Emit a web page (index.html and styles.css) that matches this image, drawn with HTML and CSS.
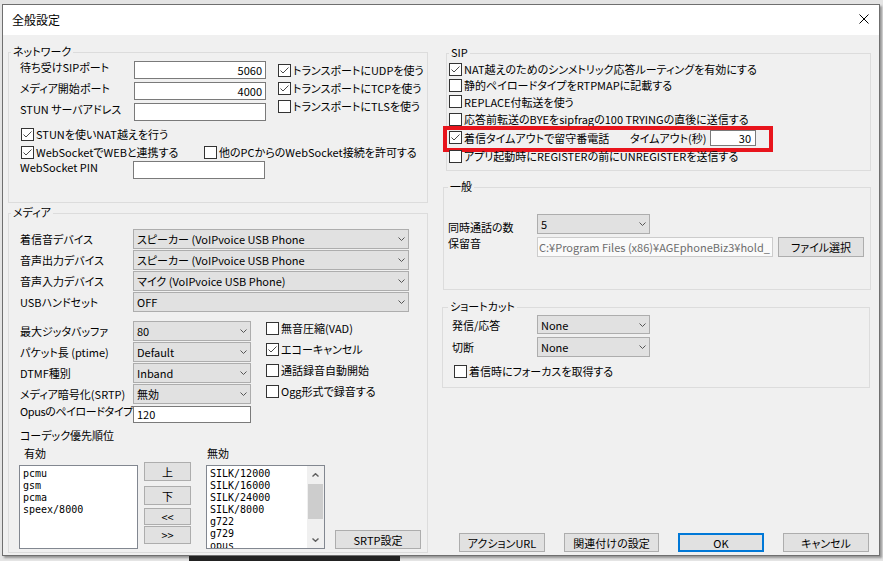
FILE: index.html
```html
<!DOCTYPE html>
<html lang="ja">
<head>
    <meta charset="UTF-8">
    <meta name="viewport" content="width=device-width, initial-scale=1.0">
    <title>全般設定</title>
    <link rel="stylesheet" href="styles.css">
</head>
<body>
<div class="window">
    <div class="titlebar">
        <span class="title">全般設定</span>
        <svg class="close" width="10" height="10" viewBox="0 0 10 10"><path d="M0.5 0.5L9.5 9.5M9.5 0.5L0.5 9.5" stroke="#000" stroke-width="1"/></svg>
    </div>
    <div class="main">
        <div class="col-left">
            <!-- network -->
            <div class="group net">
                <span class="legend">ネットワーク</span>
                <div class="net-top">
                    <div class="fields">
                        <div class="field"><span class="lbl">待ち受けSIPポート</span><span class="edit num">5060</span></div>
                        <div class="field"><span class="lbl">メディア開始ポート</span><span class="edit num">4000</span></div>
                        <div class="field"><span class="lbl">STUN サーバアドレス</span><span class="edit"></span></div>
                    </div>
                    <div class="checks">
                        <div class="check"><span class="cb"><svg width="11" height="11" viewBox="0 0 11 11"><path d="M1.5 5.5L4 8L9.5 2.5" stroke="#4a4a4a" fill="none"/></svg></span>トランスポートにUDPを使う</div>
                        <div class="check"><span class="cb"><svg width="11" height="11" viewBox="0 0 11 11"><path d="M1.5 5.5L4 8L9.5 2.5" stroke="#4a4a4a" fill="none"/></svg></span>トランスポートにTCPを使う</div>
                        <div class="check"><span class="cb"></span>トランスポートにTLSを使う</div>
                    </div>
                </div>
                <div class="check ind stun"><span class="cb"><svg width="11" height="11" viewBox="0 0 11 11"><path d="M1.5 5.5L4 8L9.5 2.5" stroke="#4a4a4a" fill="none"/></svg></span>STUNを使いNAT越えを行う</div>
                <div class="check ind">
                    <span class="ws"><span class="cb"><svg width="11" height="11" viewBox="0 0 11 11"><path d="M1.5 5.5L4 8L9.5 2.5" stroke="#4a4a4a" fill="none"/></svg></span>WebSocketでWEBと連携する</span>
                    <span class="cb"></span>他のPCからのWebSocket接続を許可する
                </div>
                <div class="field pin"><span class="lbl">WebSocket PIN</span><span class="edit"></span></div>
            </div>

            <!-- media -->
            <div class="group media">
                <span class="legend">メディア</span>
                <div class="mrows">
                    <div class="mrow"><span class="lbl">着信音デバイス</span><span class="sel wide">スピーカー (VoIPvoice USB Phone<svg width="7" height="4" viewBox="0 0 7 4"><path d="M0.5 0.5L3.5 3.5L6.5 0.5" stroke="#555" fill="none"/></svg></span></div>
                    <div class="mrow"><span class="lbl">音声出力デバイス</span><span class="sel wide">スピーカー (VoIPvoice USB Phone<svg width="7" height="4" viewBox="0 0 7 4"><path d="M0.5 0.5L3.5 3.5L6.5 0.5" stroke="#555" fill="none"/></svg></span></div>
                    <div class="mrow"><span class="lbl">音声入力デバイス</span><span class="sel wide">マイク (VoIPvoice USB Phone)<svg width="7" height="4" viewBox="0 0 7 4"><path d="M0.5 0.5L3.5 3.5L6.5 0.5" stroke="#555" fill="none"/></svg></span></div>
                    <div class="mrow"><span class="lbl">USBハンドセット</span><span class="sel wide">OFF<svg width="7" height="4" viewBox="0 0 7 4"><path d="M0.5 0.5L3.5 3.5L6.5 0.5" stroke="#555" fill="none"/></svg></span></div>
                </div>
                <div class="mrows second">
                    <div class="mrow"><span class="lbl">最大ジッタバッファ</span><span class="sel mid">80<svg width="7" height="4" viewBox="0 0 7 4"><path d="M0.5 0.5L3.5 3.5L6.5 0.5" stroke="#555" fill="none"/></svg></span><span class="check"><span class="cb"></span>無音圧縮(VAD)</span></div>
                    <div class="mrow"><span class="lbl">パケット長 (ptime)</span><span class="sel mid">Default<svg width="7" height="4" viewBox="0 0 7 4"><path d="M0.5 0.5L3.5 3.5L6.5 0.5" stroke="#555" fill="none"/></svg></span><span class="check"><span class="cb"><svg width="11" height="11" viewBox="0 0 11 11"><path d="M1.5 5.5L4 8L9.5 2.5" stroke="#4a4a4a" fill="none"/></svg></span>エコーキャンセル</span></div>
                    <div class="mrow"><span class="lbl">DTMF種別</span><span class="sel mid">Inband<svg width="7" height="4" viewBox="0 0 7 4"><path d="M0.5 0.5L3.5 3.5L6.5 0.5" stroke="#555" fill="none"/></svg></span><span class="check"><span class="cb"></span>通話録音自動開始</span></div>
                    <div class="mrow"><span class="lbl">メディア暗号化(SRTP)</span><span class="sel mid">無効<svg width="7" height="4" viewBox="0 0 7 4"><path d="M0.5 0.5L3.5 3.5L6.5 0.5" stroke="#555" fill="none"/></svg></span><span class="check"><span class="cb"></span>Ogg形式で録音する</span></div>
                </div>
                <div class="mrow opus"><span class="lbl">Opusのペイロードタイプ</span><span class="edit opus-edit">120</span></div>
                <div class="codec-title">コーデック優先順位</div>
                <div class="codec">
                    <div class="ccol">
                        <div class="clbl">有効</div>
                        <div class="listbox">
                            <div class="items">
                                <div>pcmu</div>
                                <div>gsm</div>
                                <div>pcma</div>
                                <div>speex/8000</div>
                            </div>
                        </div>
                    </div>
                    <div class="cbtns">
                        <span class="btn up">上</span>
                        <span class="btn down">下</span>
                        <span class="btn left">&lt;&lt;</span>
                        <span class="btn right">&gt;&gt;</span>
                    </div>
                    <div class="ccol off">
                        <div class="clbl">無効</div>
                        <div class="listbox">
                            <div class="items">
                                <div>SILK/12000</div>
                                <div>SILK/16000</div>
                                <div>SILK/24000</div>
                                <div>SILK/8000</div>
                                <div>g722</div>
                                <div>g729</div>
                                <div>opus</div>
                            </div>
                            <div class="vscroll">
                                <span class="arrow"><svg width="7" height="4" viewBox="0 0 7 4"><path d="M0.5 3.5L3.5 0.7L6.5 3.5" stroke="#606060" stroke-width="1.4" fill="none"/></svg></span>
                                <span class="thumb"></span>
                                <span class="arrow bottom"><svg width="7" height="4" viewBox="0 0 7 4"><path d="M0.5 0.5L3.5 3.3L6.5 0.5" stroke="#606060" stroke-width="1.4" fill="none"/></svg></span>
                            </div>
                        </div>
                    </div>
                    <span class="btn srtp">SRTP設定</span>
                </div>
            </div>
        </div>

        <div class="col-right">
            <!-- sip -->
            <div class="group sip">
                <span class="legend">SIP</span>
                <div class="srows">
                    <div class="srow h16"><span class="cb"><svg width="11" height="11" viewBox="0 0 11 11"><path d="M1.5 5.5L4 8L9.5 2.5" stroke="#4a4a4a" fill="none"/></svg></span>NAT越えのためのシンメトリック応答ルーティングを有効にする</div>
                    <div class="srow h16"><span class="cb"></span>静的ペイロードタイプをRTPMAPに記載する</div>
                    <div class="srow h17"><span class="cb"></span>REPLACE付転送を使う</div>
                    <div class="srow h18"><span class="cb"></span>応答前転送のBYEをsipfragの100 TRYINGの直後に送信する</div>
                    <div class="srow h19 mark">
                        <span class="cb"><svg width="11" height="11" viewBox="0 0 11 11"><path d="M1.5 5.5L4 8L9.5 2.5" stroke="#4a4a4a" fill="none"/></svg></span>
                        <span class="tcap">着信タイムアウトで留守番電話</span>
                        <span class="tlbl">タイムアウト(秒)</span>
                        <span class="edit num tedit">30</span>
                    </div>
                    <div class="srow h18"><span class="cb"></span>アプリ起動時にREGISTERの前にUNREGISTERを送信する</div>
                </div>
            </div>

            <!-- general -->
            <div class="group gen">
                <span class="legend">一般</span>
                <div class="grow first"><span class="lbl low">同時通話の数</span><span class="sel sm">5<svg width="7" height="4" viewBox="0 0 7 4"><path d="M0.5 0.5L3.5 3.5L6.5 0.5" stroke="#555" fill="none"/></svg></span></div>
                <div class="grow second"><span class="lbl">保留音</span><span class="edit dis">C:¥Program Files (x86)¥AGEphoneBiz3¥hold_</span><span class="btn file">ファイル選択</span></div>
            </div>

            <!-- shortcut -->
            <div class="group cut">
                <span class="legend">ショートカット</span>
                <div class="crow first"><span class="lbl">発信/応答</span><span class="sel sm">None<svg width="7" height="4" viewBox="0 0 7 4"><path d="M0.5 0.5L3.5 3.5L6.5 0.5" stroke="#555" fill="none"/></svg></span></div>
                <div class="crow second"><span class="lbl">切断</span><span class="sel sm">None<svg width="7" height="4" viewBox="0 0 7 4"><path d="M0.5 0.5L3.5 3.5L6.5 0.5" stroke="#555" fill="none"/></svg></span></div>
                <div class="check focus"><span class="cb"></span>着信時にフォーカスを取得する</div>
            </div>

            <div class="btnbar">
                <span class="btn b86">アクションURL</span>
                <span class="btn b95">関連付けの設定</span>
                <span class="btn b86 ok">OK</span>
                <span class="btn b86">キャンセル</span>
            </div>
        </div>
    </div>
</div>
<div class="desk">
    <span class="dark"></span>
</div>
</body>
</html>
```

FILE: styles.css
```css
body {
    margin: 0;
    background: #e4e4e4;
    font-family: "Noto Sans CJK JP", sans-serif;
    font-size: 11px;
    line-height: 14px;
    font-feature-settings: "palt";
    color: #000;
    overflow: hidden;
}

.window {
    box-sizing: border-box;
    width: 878px;
    height: 552px;
    margin: 4px 0 0 2px;
    border: 1px solid #6f6f6f;
    background: #f0f0f0;
    display: flex;
    flex-direction: column;
    box-shadow: 2px 2px 2px rgba(0, 0, 0, 0.35);
}

.titlebar {
    height: 30px;
    flex: none;
    background: #fff;
    display: flex;
    align-items: center;
    justify-content: space-between;
    padding: 0 10px 0 9px;
}
.title {
    font-size: 12px;
}
.close {
    display: block;
    margin-top: -2px;
}

.main {
    flex: 1;
    display: flex;
    min-height: 0;
}
.col-left {
    width: 420px;
    margin-left: 5px;
    display: flex;
    flex-direction: column;
}
.col-right {
    width: 429px;
    margin-left: 14px;
    display: flex;
    flex-direction: column;
}

/* group boxes */
.group {
    box-sizing: border-box;
    border: 1px solid #dcdcdc;
}
.legend {
    display: block;
    width: max-content;
    margin: -9px 0 0 0;
    padding: 0 2px;
    background: #f0f0f0;
}

/* common controls */
.lbl {
    flex: none;
    white-space: nowrap;
    margin-top: -1px;
}
.edit {
    box-sizing: border-box;
    flex: none;
    height: 18px;
    border: 1px solid #7a7a7a;
    background: #fff;
    padding: 0 3px;
    line-height: 16px;
    white-space: nowrap;
    overflow: hidden;
}
.num {
    text-align: right;
}
.sel {
    box-sizing: border-box;
    flex: none;
    height: 20px;
    border: 1px solid #adadad;
    background: #e1e1e1;
    display: flex;
    align-items: center;
    justify-content: space-between;
    padding: 0 3px 0 3px;
    white-space: nowrap;
    overflow: hidden;
}
.sel svg {
    flex: none;
    display: block;
}
.sel.wide { width: 276px; }
.sel.mid { width: 118px; }
.sel.sm { width: 113px; }

.btn {
    box-sizing: border-box;
    flex: none;
    border: 1px solid #adadad;
    background: #e1e1e1;
    display: flex;
    align-items: center;
    justify-content: center;
    white-space: nowrap;
}

.check {
    display: flex;
    align-items: center;
    height: 18px;
    white-space: nowrap;
}
.cb {
    box-sizing: border-box;
    flex: none;
    width: 13px;
    height: 13px;
    border: 1px solid #333;
    background: #fff;
    margin-right: 2px;
    display: flex;
}
.cb svg {
    display: block;
}

/* network */
.net {
    margin-top: 17px;
    height: 151px;
    padding-left: 11px;
}
.net .legend,
.media .legend {
    margin-left: -9px;
}
.net-top {
    display: flex;
    margin-top: 3px;
}
.fields {
    width: 246px;
}
.field {
    display: flex;
    height: 18px;
    margin-bottom: 3px;
}
.fields .field:last-child {
    margin-bottom: 0;
}
.field .lbl {
    width: 114px;
}
.field .edit {
    width: 132px;
}
.checks {
    margin-left: 12px;
}
.net .ind {
    padding-left: 1px;
}
.net .stun {
    margin-top: 4px;
}
.ws {
    display: flex;
    align-items: center;
    width: 183px;
}
.field.pin .lbl {
    width: 113px;
}

/* media */
.media {
    margin-top: 10px;
    height: 340px;
    padding-left: 11px;
}
.mrows {
    margin-top: 10px;
}
.mrows.second {
    margin-top: 9px;
}
.mrow {
    display: flex;
    align-items: center;
    height: 20px;
    margin-bottom: 1px;
}
.mrow .lbl {
    width: 113px;
    margin-top: 0;
}
.mrow .check {
    align-self: flex-start;
    height: 14px;
    margin-left: 15px;
}
.mrow.opus {
    margin-top: 2px;
    height: 17px;
    align-items: flex-start;
    margin-bottom: 0;
}
.mrow.opus .lbl {
    margin-top: -2px;
    letter-spacing: -0.4px;
}
.opus-edit {
    width: 118px;
    height: 17px;
    line-height: 15px;
}
.codec-title {
    margin-top: 5px;
}
.codec {
    display: flex;
    margin-top: 4px;
}
.ccol {
    width: 119px;
    margin-left: -1px;
}
.ccol.off {
    margin-left: 15px;
}
.clbl {
    padding-left: 5px;
}
.ccol.off .clbl {
    padding-left: 1px;
}
.listbox {
    box-sizing: border-box;
    margin-top: 5px;
    height: 84px;
    border: 1px solid #828790;
    background: #fff;
    display: flex;
    font-family: "DejaVu Sans Mono", monospace;
    font-size: 10px;
    line-height: 12px;
}
.items {
    flex: 1;
    padding: 2px 3px 0;
    overflow: hidden;
}
.vscroll {
    width: 17px;
    background: #f0f0f0;
    display: flex;
    flex-direction: column;
}
.arrow {
    height: 17px;
    display: flex;
    align-items: center;
    justify-content: center;
}
.arrow svg {
    display: block;
}
.arrow.bottom {
    margin-top: auto;
}
.thumb {
    height: 35px;
    margin: 1px 1px 0;
    background: #cdcdcd;
}
.cbtns {
    width: 47px;
    margin-left: 6px;
    display: flex;
    flex-direction: column;
}
.cbtns .up { height: 19px; margin-top: 16px; }
.cbtns .down { height: 19px; margin-top: 5px; }
.cbtns .left { height: 17px; margin-top: 3px; }
.cbtns .right { height: 18px; margin-top: 1px; }
.srtp {
    align-self: flex-end;
    width: 86px;
    height: 19px;
    margin-left: 10px;
}

/* sip */
.sip {
    margin: 18px 0 0 4px;
    height: 118px;
    padding-left: 2px;
}
.srows {
    margin-top: 2px;
}
.srow {
    display: flex;
    align-items: center;
    white-space: nowrap;
    position: relative;
}
.h16 { height: 16px; }
.h17 { height: 17px; }
.h18 { height: 18px; }
.h19 { height: 19px; }
.tcap {
    width: 166px;
}
.tlbl {
    width: 80px;
}
.tedit {
    width: 46px;
    height: 16px;
    line-height: 14px;
    padding-right: 4px;
}
.srow.mark::after {
    content: "";
    position: absolute;
    left: -6px;
    top: -2px;
    width: 330px;
    height: 26px;
    box-sizing: border-box;
    border: 4px solid #e8141c;
}

/* general */
.gen {
    margin: 16px 0 0 1px;
    height: 103px;
    padding-left: 4px;
}
.grow,
.crow {
    display: flex;
    height: 20px;
}
.grow .lbl {
    width: 89px;
}
.grow .lbl.low {
    align-self: flex-end;
}
.grow.first {
    margin-top: 21px;
}
.grow.second {
    margin-top: 3px;
}
.edit.dis {
    width: 236px;
    height: 20px;
    line-height: 18px;
    border-color: #cccccc;
    background: #fafafa;
    color: #6d6d6d;
    padding: 0 1px;
}
.file {
    width: 86px;
    height: 20px;
    margin-left: 5px;
}

/* shortcut */
.cut {
    margin: 17px 1px 0 0;
    height: 81px;
    padding-left: 9px;
}
.cut .legend {
    margin-left: -4px;
}
.crow {
    align-items: center;
}
.crow .lbl {
    width: 85px;
    margin-top: 0;
}
.crow.first {
    margin-top: 2px;
    height: 19px;
}
.crow.first .sel {
    height: 19px;
}
.crow.second {
    margin-top: 3px;
}
.check.focus {
    margin: 5px 0 0 2px;
}

/* bottom buttons */
.btnbar {
    display: flex;
    gap: 19px;
    margin: auto 0 3px 17px;
}
.b86 {
    width: 86px;
    height: 19px;
}
.b95 {
    width: 95px;
    height: 19px;
}
.btn.ok {
    border: 2px solid #0078d7;
}

.desk {
    height: 5px;
    display: flex;
}
.dark {
    width: 211px;
    margin-left: 189px;
    background: #222;
}
```
